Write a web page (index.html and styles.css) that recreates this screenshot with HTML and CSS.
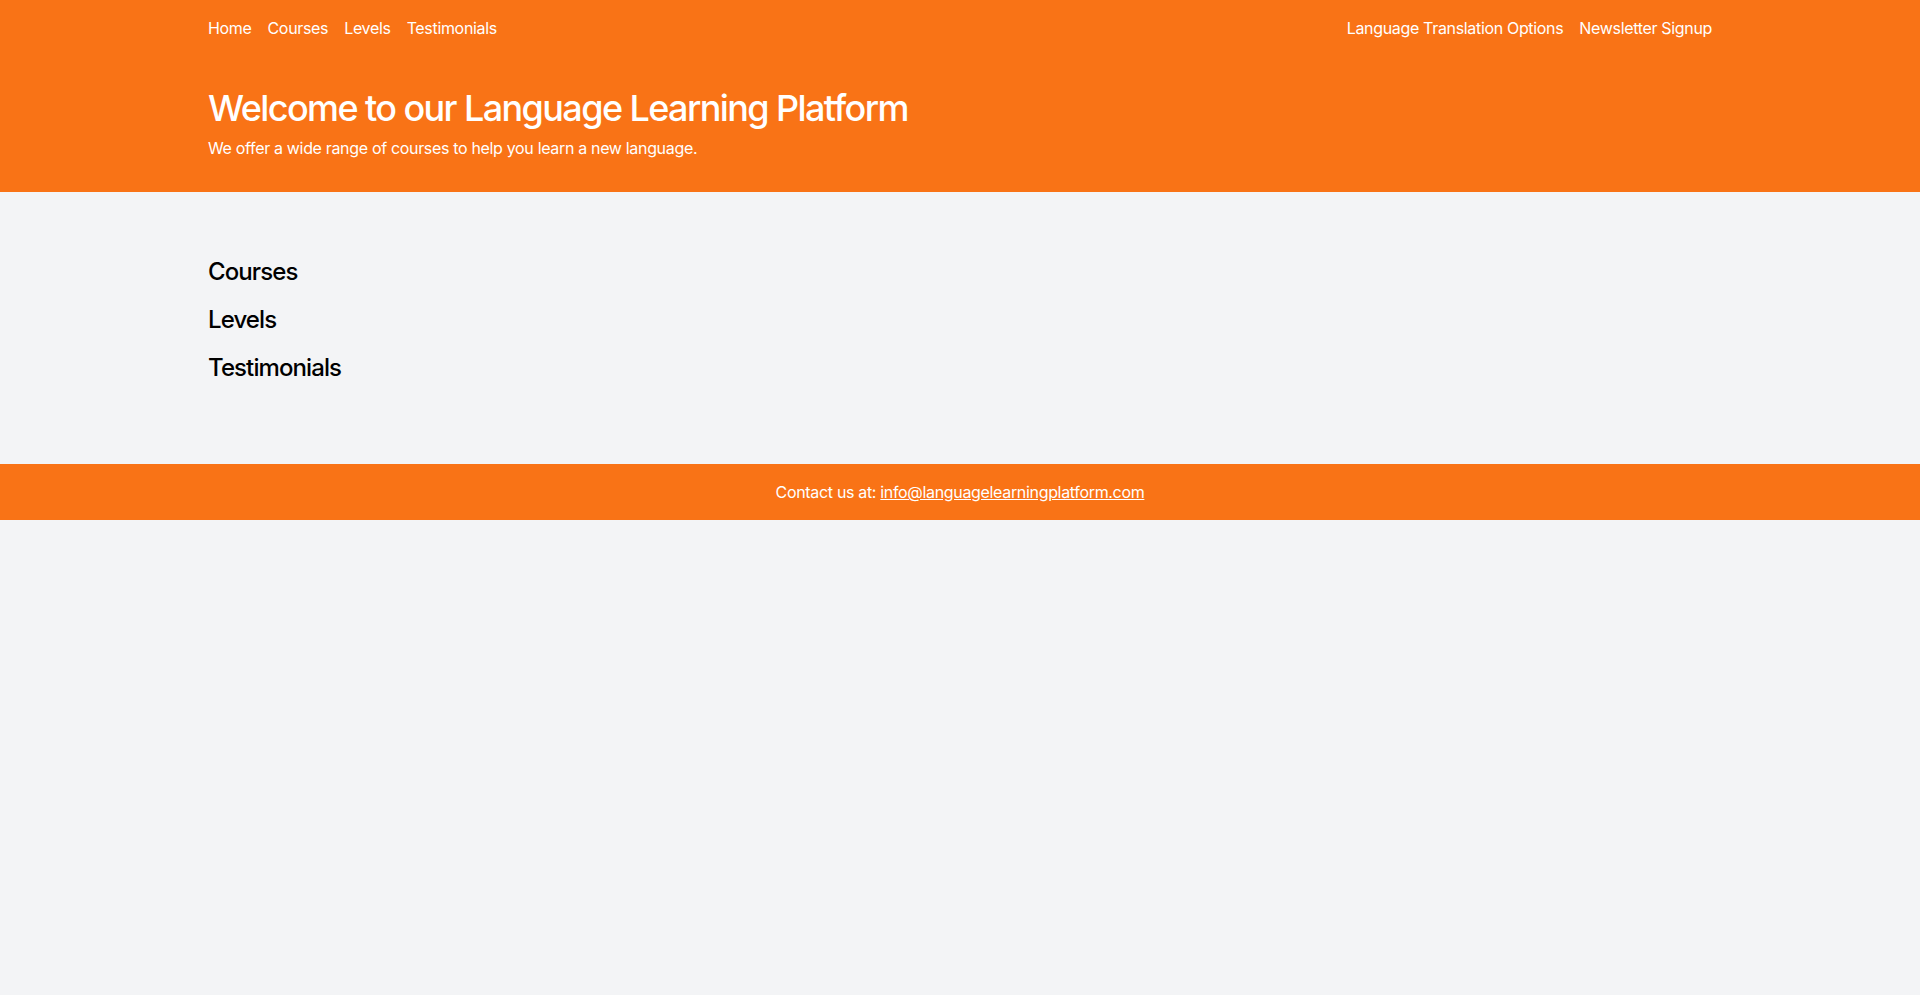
FILE: index.html
```html
<!DOCTYPE html>
<html lang="en">
<head>
<meta charset="utf-8">
<title>Language Learning Platform</title>
<link rel="stylesheet" href="styles.css">
</head>
<body>
<header class="header">
  <div class="container">
    <nav class="nav">
      <ul class="nav-list">
        <li><a href="#">Home</a></li>
        <li><a href="#">Courses</a></li>
        <li><a href="#">Levels</a></li>
        <li><a href="#">Testimonials</a></li>
      </ul>
      <ul class="nav-list">
        <li><a href="#">Language Translation Options</a></li>
        <li><a href="#">Newsletter Signup</a></li>
      </ul>
    </nav>
    <div class="hero">
      <h1 class="hero-title">Welcome to our Language Learning Platform</h1>
      <p class="hero-text">We offer a wide range of courses to help you learn a new language.</p>
    </div>
  </div>
</header>
<main class="main">
  <div class="container">
    <section class="section"><h2 class="section-title">Courses</h2></section>
    <section class="section"><h2 class="section-title">Levels</h2></section>
    <section class="section"><h2 class="section-title">Testimonials</h2></section>
  </div>
</main>
<footer class="footer">
  <p>Contact us at: <a href="#">info@languagelearningplatform.com</a></p>
</footer>
</body>
</html>
```

FILE: styles.css
```css
* { box-sizing: border-box; }
html, body { margin: 0; padding: 0; }
body {
  background: #f3f4f6;
  font-family: Inter, "Noto Sans", sans-serif;
  font-size: 16px;
  line-height: 24px;
  letter-spacing: -0.33px;
  color: #000;
  min-height: 995px;
}
.container {
  max-width: 1536px;
  margin: 0 auto;
  padding: 0 16px;
}
.header {
  background: #f97316;
  color: #fff;
}
.nav {
  display: flex;
  justify-content: space-between;
  padding: 16px 0;
}
.nav-list {
  display: flex;
  gap: 16px;
  list-style: none;
  margin: 0;
  padding: 0;
}
.nav-list a {
  color: #fff;
  text-decoration: none;
}
.hero {
  padding: 32px 0;
}
.hero-title {
  margin: 0 0 8px;
  font-size: 36px;
  line-height: 40px;
  font-weight: 500;
  letter-spacing: -1.6px;
}
.hero-text {
  margin: 0;
}
.main {
  padding: 64px 0;
}
.section-title {
  margin: 0 0 16px;
  font-size: 24px;
  line-height: 32px;
  font-weight: 500;
  letter-spacing: -0.9px;
  color: #000;
}
.footer {
  background: #f97316;
  color: #fff;
  text-align: center;
  padding: 16px 0;
}
.footer p { margin: 0; }
.footer a { color: #fff; text-decoration: underline; }
```
